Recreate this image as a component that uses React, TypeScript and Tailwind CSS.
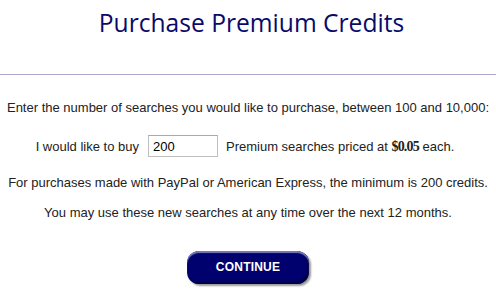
import React from 'react';

const App = () => (
  <div className="w-[496px] h-[291px] bg-white overflow-hidden font-['Liberation_Sans',Arial,sans-serif] text-[13px] leading-[15px] text-[#222]">
    {/* Heading */}
    <h1 className="pt-[6px] pl-[7px] text-center font-['Open_Sans',sans-serif] text-[24.6px] leading-[33px] text-[#0a0a6b]">
      Purchase Premium Credits
    </h1>
    <div className="mt-[35px] h-px bg-[#aaa9cc]" />

    <div className="flex flex-col items-center pt-[25px]">
      <p className="text-center">
        Enter the number of searches you would like to purchase, between 100 and 10,000:
      </p>
      <div className="mt-[20px] pr-[6px] flex items-center">
        <span>I would like to buy</span>
        <input
          type="text"
          defaultValue="200"
          className="ml-[9px] mr-[8px] w-[70px] h-[22px] border border-[#bfbfbf] border-t-[#a9a9a9] px-[4px] text-[13px] text-black outline-none"
        />
        <span>
          Premium searches priced at{' '}
          <b className="font-['Liberation_Serif',serif] text-[14px] leading-[15px] tracking-[-0.8px]">$0.05</b> each.
        </span>
      </div>
      <p className="mt-[18px] text-center">
        For purchases made with PayPal or American Express, the minimum is 200 credits.
      </p>
      <p className="mt-[15px] text-center">
        You may use these new searches at any time over the next 12 months.
      </p>
      <button className="mt-[31px] w-[122px] h-[33px] rounded-[12px] bg-[#00006e] text-white font-bold text-[12px] tracking-[0.2px] shadow-[inset_0_2px_1px_#7a7ab8,inset_-2px_-2px_2px_#000040,2px_2px_2px_#9a9a9a]">
        CONTINUE
      </button>
    </div>
  </div>
);

export default App;
